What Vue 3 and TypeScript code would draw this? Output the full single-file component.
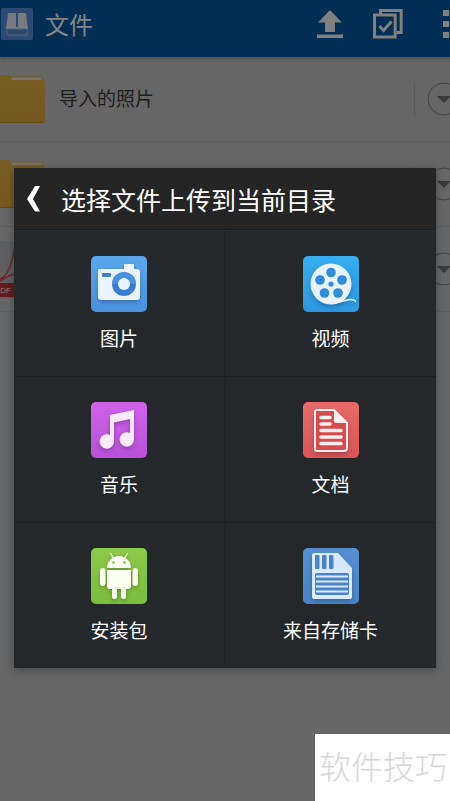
<script setup lang="ts">
type IconName = 'photo' | 'video' | 'music' | 'document' | 'package' | 'card'

interface Source {
  icon: IconName
  label: string
}

interface Entry {
  kind: 'folder' | 'pdf'
  name: string
}

const entries: Entry[] = [
  { kind: 'folder', name: '导入的照片' },
  { kind: 'folder', name: '' },
  { kind: 'pdf', name: '' },
]

const sources: Source[] = [
  { icon: 'photo', label: '图片' },
  { icon: 'video', label: '视频' },
  { icon: 'music', label: '音乐' },
  { icon: 'document', label: '文档' },
  { icon: 'package', label: '安装包' },
  { icon: 'card', label: '来自存储卡' },
]
</script>

<template>
  <div class="screen">
    <header class="toolbar">
      <svg class="app-icon" viewBox="0 0 32 32" aria-hidden="true">
        <rect width="32" height="32" rx="2" fill="#2c4a74" />
        <path d="M8 5h16q1 0 1 1l2 15H5L7 6q0-1 1-1z" fill="#777b80" />
        <path d="M16 5v15" stroke="#2c4a74" stroke-width="2" />
        <path d="M6 21h20v6H6z" fill="#29486f" stroke="#52637b" />
        <path d="M6 19.500h20" stroke="#777b80" />
      </svg>
      <h1 class="toolbar-title">文件</h1>
      <button class="tool" type="button" aria-label="上传">
        <svg class="upload-icon" viewBox="0 0 26 28" aria-hidden="true">
          <path d="M13 0 25 12.500h-7V22H8v-9.500H1z" />
          <path d="M0 24.500h26V28H0z" />
        </svg>
      </button>
      <button class="tool" type="button" aria-label="选择">
        <svg class="select-icon" viewBox="0 0 30 30" aria-hidden="true">
          <path d="M7.500 5V1.500h20.700v22H24M1.500 6h20.700v22H1.500z" />
          <path d="m6.500 17 4 4.500 8-9" />
        </svg>
      </button>
      <button class="tool" type="button" aria-label="更多">
        <svg class="more-icon" viewBox="0 0 6 28" aria-hidden="true">
          <path d="M0 0h6v6H0zM0 11h6v6H0zM0 22h6v6H0z" />
        </svg>
      </button>
    </header>

    <ul class="files">
      <li v-for="(entry, index) in entries" :key="index" class="file">
        <svg v-if="entry.kind === 'folder'" class="file-icon" viewBox="0 0 45 57" aria-hidden="true">
          <defs>
            <linearGradient id="folder-fill" x2="0" y2="1">
              <stop offset="0" stop-color="#785d24" />
              <stop offset="1" stop-color="#735820" />
            </linearGradient>
          </defs>
          <path d="M8 6h34v8H8z" fill="#77736a" stroke="#735b24" />
          <path d="M0 4h8q2 0 3 2l1 3h30q3 0 3 3v37q0 3-3 3H0z" fill="url(#folder-fill)" />
          <path d="M0 51.500h43" stroke="#624c1c" />
        </svg>
        <svg v-else class="file-icon" viewBox="0 0 45 57" aria-hidden="true">
          <path d="M0 0h30l15 15v42H0z" fill="#5e5d60" />
          <path d="M0 38c8-3 12-15 14-30 3 13 9 20 20 22-14 0-24 3-34 10" fill="none" stroke="#6c2a2c" stroke-width="1.500" />
          <path d="M0 42h45v14H0z" fill="#641c1d" />
          <text x="-5" y="52" fill="#858080" font-family="Liberation Sans, sans-serif" font-size="8">PDF</text>
        </svg>
        <span class="file-name">{{ entry.name }}</span>
        <button class="file-menu" type="button" aria-label="展开">
          <svg viewBox="0 0 34 34" aria-hidden="true">
            <circle cx="17" cy="17" r="16" fill="none" stroke="#444" />
            <path d="M10 14h14l-7 7z" fill="#3a3a3a" />
          </svg>
        </button>
      </li>
    </ul>

    <div class="overlay">
      <section class="dialog" role="dialog" aria-labelledby="dialog-title">
        <header class="dialog-head">
          <button class="back" type="button" aria-label="返回">
            <svg viewBox="0 0 13 26" aria-hidden="true">
              <path d="M8 0h5L6 13l7 12.500H8L0 13z" />
            </svg>
          </button>
          <h2 id="dialog-title" class="dialog-title">选择文件上传到当前目录</h2>
        </header>
        <div class="sources">
          <button v-for="source in sources" :key="source.icon" class="source" type="button">
            <span class="tile" :class="source.icon">
              <svg v-if="source.icon === 'photo'" viewBox="0 0 56 56" aria-hidden="true">
                <path d="M9 13h24V9q0-1 1-1h8q1 0 1 1v4h3q3 0 3 3v25q0 3-3 3H10q-3 0-3-3V15q0-2 2-2z" fill="#e9f4ff" />
                <rect x="11" y="17" width="9" height="4" rx="1" fill="#397fd0" />
                <circle cx="33" cy="28" r="12" fill="#397fd0" />
                <path d="M21 28a12 12 0 0 1 24 0z" fill="#5ca2e8" opacity=".5" />
                <circle cx="33" cy="28" r="6" fill="#e9f4ff" />
              </svg>
              <svg v-else-if="source.icon === 'video'" viewBox="0 0 56 56" aria-hidden="true">
                <circle cx="28" cy="28" r="20.500" fill="#e8f3fd" />
                <path d="M28 47.500c9 0 14-4 19-4 4 0 6 1 5 2.500" fill="none" stroke="#e8f3fd" stroke-width="1.500" />
                <g fill="#2f8cda">
                  <circle cx="28" cy="16.500" r="4.800" />
                  <circle cx="39" cy="24" r="4.800" />
                  <circle cx="35" cy="37" r="4.800" />
                  <circle cx="21.500" cy="37" r="4.800" />
                  <circle cx="17" cy="24" r="4.800" />
                  <circle cx="28" cy="28" r="2.600" />
                </g>
              </svg>
              <svg v-else-if="source.icon === 'music'" viewBox="0 0 56 56" aria-hidden="true">
                <path d="M19 13 43 8v29a7.200 7.200 0 1 1-4-6V17l-16 3.500V39a7.200 7.200 0 1 1-4-6z" fill="#fce9ff" />
              </svg>
              <svg v-else-if="source.icon === 'document'" viewBox="0 0 56 56" aria-hidden="true">
                <path d="M14 8h17l13 13v25q0 3-3 3H14q-2 0-2-2V10q0-2 2-2z" fill="#d84c50" stroke="#fff0ee" stroke-width="2" />
                <path d="M31 7 45 21H33q-2 0-2-2z" fill="#fff0ee" />
                <path d="M18 15.500h9M18 22h9M18 28.500h20M18 35h20M18 41.500h20" fill="none" stroke="#fff0ee" stroke-width="3.500" stroke-linecap="round" />
              </svg>
              <svg v-else-if="source.icon === 'package'" viewBox="0 0 56 56" aria-hidden="true">
                <g fill="#fbfff0">
                  <path d="M16 20a12 12 0 0 1 24 0z" />
                  <path d="M16 22h24v16q0 3-3 3h-2v7.500a2.500 2.500 0 0 1-5 0V41h-4v7.500a2.500 2.500 0 0 1-5 0V41h-2q-3 0-3-3z" />
                  <rect x="9" y="20" width="5.500" height="18" rx="2.700" />
                  <rect x="41.500" y="20" width="5.500" height="18" rx="2.700" />
                </g>
                <path d="m22.500 10.500-3-5M33.500 10.500l3-5" stroke="#fbfff0" stroke-width="1.200" stroke-linecap="round" />
                <circle cx="22.500" cy="14.500" r="1.200" fill="#75b93e" />
                <circle cx="33.500" cy="14.500" r="1.200" fill="#75b93e" />
              </svg>
              <svg v-else viewBox="0 0 56 56" aria-hidden="true">
                <path d="M11 5h24l14 15v29q0 2-2 2H11q-2 0-2-2V7q0-2 2-2z" fill="#d8eaff" />
                <g fill="#4a84c8">
                  <rect x="12" y="7" width="4.500" height="14" rx="1" />
                  <rect x="19" y="7" width="4.500" height="14" rx="1" />
                  <rect x="26" y="7" width="4.500" height="14" rx="1" />
                  <rect x="12" y="25" width="34" height="22" rx="2" />
                </g>
                <path d="M13 28.500h32M13 33.500h32M13 38.500h32M13 43.500h32" stroke="#d8eaff" stroke-width="2" />
              </svg>
            </span>
            <span class="source-label">{{ source.label }}</span>
          </button>
        </div>
      </section>
    </div>

    <aside class="watermark">软件技巧</aside>
  </div>
</template>

<style>
body {
  margin: 0;
  background: #666;
}
</style>

<style scoped>
.screen {
  position: relative;
  min-height: 100vh;
  overflow: hidden;
  background: #666;
  font-family: "Noto Sans CJK SC", sans-serif;
}

button {
  padding: 0;
  border: 0;
  background: none;
  color: inherit;
  font: inherit;
}

svg {
  display: block;
}

.toolbar {
  display: flex;
  align-items: center;
  box-sizing: border-box;
  height: 57px;
  padding-bottom: 10px;
  background: #002e55;
  box-shadow: 0 1px 3px #444;
}

.app-icon {
  width: 32px;
  height: 32px;
  margin-left: 1px;
}

.toolbar-title {
  flex: 1;
  margin: 0 0 0 12px;
  color: #858585;
  font-size: 24px;
  font-weight: 400;
  line-height: 32px;
}

.tool {
  flex: none;
}

.upload-icon {
  width: 26px;
  height: 28px;
  margin-right: 30px;
  fill: #808080;
}

.select-icon {
  width: 30px;
  height: 30px;
  margin-right: 40px;
  fill: none;
  stroke: #808080;
  stroke-width: 3;
}

.more-icon {
  width: 6px;
  height: 28px;
  margin-right: 1px;
  fill: #808080;
}

.files {
  margin: 0;
  padding: 0;
  list-style: none;
}

.file {
  display: flex;
  align-items: center;
  box-sizing: border-box;
  height: 85px;
  border-bottom: 1px solid #5e5e5e;
}

.file-icon {
  flex: none;
  width: 45px;
  height: 57px;
}

.file-name {
  flex: 1;
  padding: 0 0 2px 14px;
  color: #202020;
  font-size: 19px;
  line-height: 28px;
}

.file-menu {
  flex: none;
  height: 34px;
  margin-right: -11px;
  padding-left: 12px;
  border-left: 1px solid #5a5a5a;
}

.file-menu svg {
  width: 34px;
  height: 34px;
}

.overlay {
  position: absolute;
  inset: 0;
  display: grid;
  align-items: center;
  padding: 35px 14px 0;
}

.dialog {
  background: #24282b;
  box-shadow: 0 2px 8px rgba(0, 0, 0, 0.3);
  color: #fff;
}

.dialog-head {
  display: flex;
  align-items: center;
  box-sizing: border-box;
  height: 62px;
  padding: 0 13px;
  border-bottom: 1px solid #1b1c1e;
  background: #252525;
}

.back svg {
  width: 13px;
  height: 26px;
  fill: #fff;
}

.dialog-title {
  margin: 0 0 0 21px;
  font-size: 25px;
  font-weight: 400;
  line-height: 36px;
}

.sources {
  display: grid;
  grid-template-columns: 1fr 1fr;
}

.source {
  display: flex;
  flex-direction: column;
  align-items: center;
  gap: 12px;
  box-sizing: border-box;
  height: 146px;
  padding-top: 25px;
  border-top: 1px solid #1d2022;
}

.source:nth-child(odd) {
  border-right: 1px solid #202326;
}

.source:nth-child(-n + 2) {
  border-top-color: #292c33;
}

.tile {
  width: 56px;
  height: 56px;
  border-radius: 5px;
}

.tile svg {
  width: 56px;
  height: 56px;
  filter: drop-shadow(0 2px 2px rgba(0, 0, 0, 0.25));
}

.photo {
  background: linear-gradient(#5ca7ea, #4a91dc);
}

.video {
  background: linear-gradient(#36adf0, #2d98e2);
}

.music {
  background: linear-gradient(#cf63e8, #b851d8);
}

.document {
  background: linear-gradient(#e86a69, #da5557);
}

.package {
  background: linear-gradient(#8cca49, #7bbd3d);
}

.card {
  background: linear-gradient(#5590d3, #4a84c8);
}

.source-label {
  font-size: 19px;
  line-height: 28px;
}

.watermark {
  position: absolute;
  right: 0;
  bottom: 0;
  box-sizing: border-box;
  height: 67px;
  padding: 7px 3px 0 4px;
  background: #fff;
  color: #d8d8d8;
  font-size: 32px;
  font-weight: 300;
  line-height: 48px;
}
</style>
